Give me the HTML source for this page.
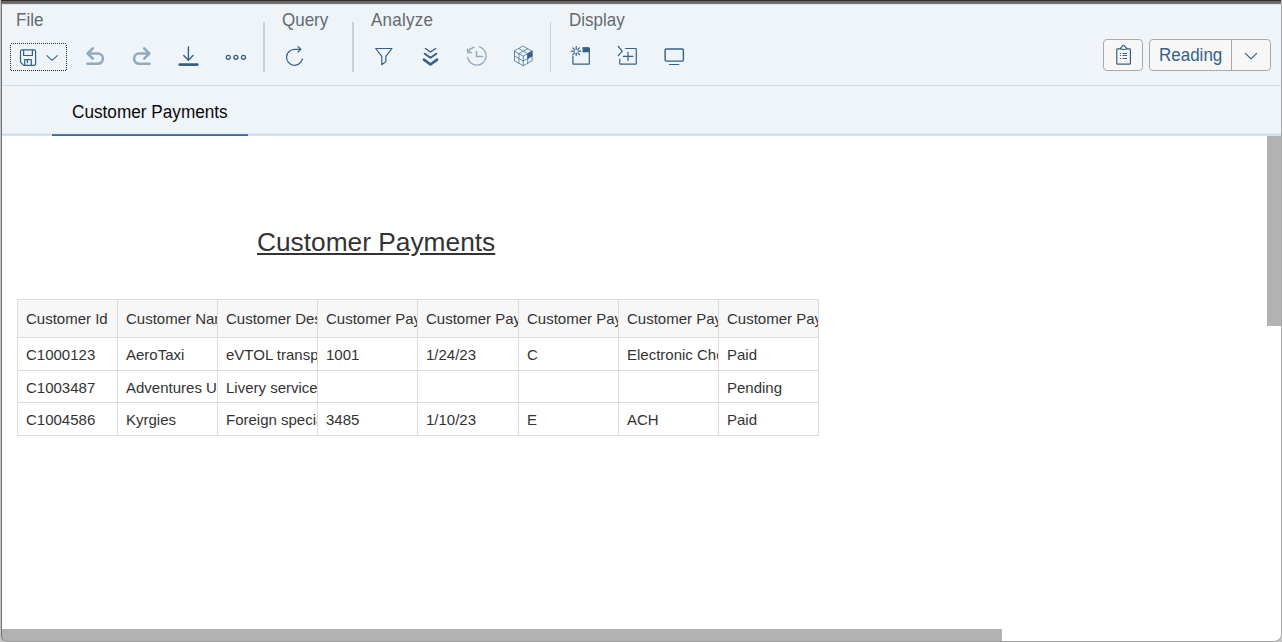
<!DOCTYPE html>
<html>
<head>
<meta charset="utf-8">
<title>Customer Payments</title>
<style>
*{box-sizing:border-box;margin:0;padding:0}
html,body{width:1282px;height:642px;overflow:hidden;background:#c2c2c2;font-family:"Liberation Sans",sans-serif}
#clip{position:absolute;left:1px;top:0;width:1281px;height:642px;overflow:hidden;border-radius:0 0 8px 6px;background:#fff}
#win{position:absolute;left:-1px;top:0;width:1282px;height:642px;background:#fff}
#frame{position:absolute;left:1px;top:3px;width:1281px;height:639px;border-radius:0 0 8px 6px;border-left:1px solid #747474;border-right:1px solid #a6a6a6;border-bottom:1px solid #9b9b9b}
.abs{position:absolute}
#hdr{left:2px;top:4px;width:1279px;height:81px;background:#eff4f9}
#hdrline{left:2px;top:85px;width:1279px;height:1px;background:#cbdcee}
#tabbar{left:2px;top:86px;width:1279px;height:47px;background:#eff4f9}
.gl{position:absolute;top:8px;font-size:18.2px;line-height:24px;color:#646a70;white-space:nowrap;transform:scaleX(0.934);transform-origin:0 0}
.sep{position:absolute;top:22px;height:50px;width:2px;background:#c7cfd9}
.btn{position:absolute;top:39px;height:32px;background:#f7f7f7;border:1px solid #a9a9a9;border-radius:4px}
svg{position:absolute;left:0;top:0;overflow:visible}
.s{fill:none;stroke:#346187;stroke-width:1.2;stroke-linecap:round;stroke-linejoin:round}
.d{fill:none;stroke:#91aac0;stroke-linecap:round;stroke-linejoin:round}
table{position:absolute;left:17px;top:299px;border-collapse:collapse;table-layout:fixed;width:801px;font-size:15px;color:#333}
td,th{border:1px solid #dcdcdc;overflow:hidden;white-space:nowrap;text-align:left;font-weight:normal;padding:0 0 0 8px}
th{background:#f7f7f7;height:38px}
td{height:33px}
tr.r2 td{height:32px;padding-top:2px}
</style>
</head>
<body>
<div id="clip"><div id="win">
  <!-- header toolbar -->
  <div id="hdr" class="abs"></div>
  <div id="hdrline" class="abs"></div>
  <div id="tabbar" class="abs"></div>

  <div class="gl" style="left:16px">File</div>
  <div class="gl" style="left:282px">Query</div>
  <div class="gl" style="left:371px;letter-spacing:0.25px">Analyze</div>
  <div class="gl" style="left:569px">Display</div>

  <div class="sep" style="left:263px"></div>
  <div class="sep" style="left:352px"></div>
  <div class="sep" style="left:550px;width:1px"></div>

  <!-- focused save button (dotted) -->
  <div class="abs" style="left:11px;top:43px;width:55px;height:1px;background:repeating-linear-gradient(90deg,#2a2a2a 0 1px,transparent 1px 2px)"></div>
  <div class="abs" style="left:11px;top:70px;width:55px;height:1px;background:repeating-linear-gradient(90deg,#2a2a2a 0 1px,transparent 1px 2px)"></div>
  <div class="abs" style="left:10px;top:45px;width:1px;height:25px;background:repeating-linear-gradient(180deg,#2a2a2a 0 1px,transparent 1px 2px)"></div>
  <div class="abs" style="left:66px;top:45px;width:1px;height:25px;background:repeating-linear-gradient(180deg,#2a2a2a 0 1px,transparent 1px 2px)"></div>

  <!-- right buttons -->
  <div class="btn" style="left:1103px;width:40px"></div>
  <div class="btn" style="left:1149px;width:122px"></div>
  <div class="abs" style="left:1231px;top:40px;width:1px;height:30px;background:#a9a9a9"></div>
  <div class="abs" style="left:1159px;top:43px;font-size:18.2px;line-height:24px;color:#346187;transform:scaleX(0.934);transform-origin:0 0">Reading</div>

  <!-- icons -->
  <svg id="icons" width="1282" height="100" viewBox="0 0 1282 100">
    <!-- save -->
    <path class="s" d="M21.9,49.8 H34.2 Q35.6,49.8 35.6,51.2 V63.9 Q35.6,65.3 34.2,65.3 H23.6 L20.5,62.2 V51.2 Q20.5,49.8 21.9,49.8 Z"/>
    <path class="s" d="M23.6,50 V55.5 H32.4 V50"/>
    <path class="s" d="M24.7,65.2 V59.6 H31.3 V65.2"/>
    <path class="s" d="M27.4,59.8 V62.7"/>
    <path class="s" style="stroke-width:1.1" d="M46.9,55.7 L52.1,60.3 L57.3,55.7"/>
    <!-- undo / redo (disabled) -->
    <path class="d" style="stroke-width:2.6" d="M92.8,48.3 L87.6,53.5 L92.8,58.7 M87.6,53.5 H97.8 A5.1,5.1 0 0 1 97.8,63.7 H87.5"/>
    <path class="d" style="stroke-width:2.6" d="M144.2,48.3 L149.4,53.5 L144.2,58.7 M149.4,53.5 H139.2 A5.1,5.1 0 0 0 139.2,63.7 H149.5"/>
    <!-- download -->
    <path class="s" style="stroke-width:1.4" d="M188.4,46.9 V60 M183.8,55.6 L188.4,60.2 L193,55.6"/>
    <path class="s" style="stroke-width:2.9" d="M179.8,64.6 H197.2"/>
    <!-- overflow -->
    <circle class="s" style="stroke-width:1.3" cx="228.3" cy="57.3" r="2"/>
    <circle class="s" style="stroke-width:1.3" cx="235.9" cy="57.3" r="2"/>
    <circle class="s" style="stroke-width:1.3" cx="243.5" cy="57.3" r="2"/>
    <!-- refresh -->
    <path class="s" style="stroke-width:1.2" d="M300.6,49.3 H294.4 A8,8 0 1 0 302.4,58.9"/>
    <path class="s" style="stroke-width:1.2" d="M298,46.6 L300.8,49.3 L298,52"/>
    <!-- filter -->
    <path class="s" style="stroke-width:1.2" d="M375.7,48.5 H392 L385.8,56.3 V61.6 L381.8,64.8 V56.3 Z"/>
    <!-- drill down -->
    <path class="s" style="stroke-width:1.4" d="M425.4,48.5 L430.5,52 L435.6,48.5"/>
    <path class="s" style="stroke-width:2" d="M424.7,53.7 L430.5,57.8 L436.3,53.7"/>
    <path class="s" style="stroke-width:2.6" d="M423.9,59.6 L430.5,64.5 L437.1,59.6"/>
    <!-- history (disabled) -->
    <path class="d" style="stroke-width:1.4" d="M479.4,46.9 A9.3,9.3 0 1 1 467.7,57.4"/>
    <path class="d" style="stroke-width:1.4" d="M474.1,47.2 Q469.5,48.8 467.8,52.4 M467.4,49.3 L467.8,52.5 L471.6,52.5"/>
    <path class="d" style="stroke-width:1.5" d="M476.5,51.4 V56.6 H482.8"/>
    <!-- cube -->
    <g class="s" style="stroke-width:0.7">
      <path d="M523.3,46.2 L532.1,51.2 V60.8 L523.3,65.7 L514.5,60.8 V51.2 Z"/>
      <path d="M514.5,51.2 L523.3,56.2 L532.1,51.2 M523.3,56.2 V65.7"/>
      <path d="M518.9,48.7 L527.7,53.7 V63.2 M527.7,48.7 L518.9,53.7 V63.2"/>
      <path d="M514.5,56 L523.3,61 L532.1,56"/>
    </g>
    <path d="M527.7,53.7 L532.1,51.2 V56 L527.7,58.5 Z" fill="#346187" stroke="#346187" stroke-width="0.6"/>
    <!-- new item -->
    <path class="s" d="M582.8,47.9 H588.5 Q589.3,47.9 589.3,48.7 V63.4 Q589.3,64.2 588.5,64.2 H573.7 Q572.9,64.2 572.9,63.4 V56"/>
    <path d="M582.6,47.4 H588.2 Q589.9,47.4 589.9,49 V51.9 L582.6,52.6 Z" fill="#346187"/>
    <path class="s" style="stroke-width:1.2" d="M576.2,46.5 V49.4 M576.2,53 V55.6 M571.3,51.2 H574.3 M578.1,51.2 H580.8 M572.9,47.9 L574.6,49.6 M577.8,52.8 L579.5,54.5 M579.5,47.9 L577.8,49.6 M574.6,52.8 L572.9,54.5"/>
    <!-- add -->
    <path class="s" d="M618.3,46.5 L622.3,51.2 L618.3,55.6"/>
    <path class="s" d="M625.5,48.5 H635.5 Q636.3,48.5 636.3,49.3 V63.4 Q636.3,64.2 635.5,64.2 H620.6 Q619.8,64.2 619.8,63.4 V59.2"/>
    <path class="s" style="stroke-width:1.2" d="M623.4,56.4 H632.8 M628,52.2 V60.6"/>
    <!-- screen -->
    <rect class="s" style="stroke-width:1.4" x="665.1" y="49" width="18.3" height="12.1" rx="1.3"/>
    <path class="s" style="stroke-width:1.2" d="M669.4,64.5 H678.8"/>
    <!-- clipboard -->
    <path class="s" style="stroke-width:1.2" d="M1120.6,48.9 H1117.6 Q1116.8,48.9 1116.8,49.7 V63.4 Q1116.8,64.2 1117.6,64.2 H1129.6 Q1130.4,64.2 1130.4,63.4 V49.7 Q1130.4,48.9 1129.6,48.9 H1126.6"/>
    <path class="s" style="stroke-width:1.2" d="M1120.3,48.6 L1122.6,45.8 Q1123.6,44.9 1124.6,45.8 L1126.9,48.6 Q1123.6,50.6 1120.3,48.6 Z"/>
    <path class="s" style="stroke-width:1.1;stroke-linecap:butt" d="M1119.9,53.5 H1121 M1122.4,53.5 H1127.1 M1119.9,55.5 H1121 M1122.4,55.5 H1127.1 M1119.9,58.5 H1121 M1122.4,58.5 H1127.1"/>
    <!-- reading chevron -->
    <path class="s" style="stroke-width:1.2" d="M1245.4,53.3 L1251,58.9 L1256.6,53.3"/>
  </svg>

  <!-- tab -->
  <div class="abs" style="left:72px;top:100.1px;font-size:17.2px;line-height:22px;color:#0a0a0a;white-space:nowrap;transform:scaleY(1.045);transform-origin:0 0">Customer Payments</div>
  <div class="abs" style="left:2px;top:133px;width:1279px;height:1px;background:#e1ebf5"></div>
  <div class="abs" style="left:2px;top:134px;width:1279px;height:1px;background:#cedeed"></div>
  <div class="abs" style="left:2px;top:135px;width:1279px;height:1px;background:#d1e2f2"></div>
  <div class="abs" style="left:52px;top:134px;width:196px;height:1px;background:#4d83b5"></div>
  <div class="abs" style="left:52px;top:135px;width:196px;height:1px;background:#2e6da4"></div>

  <!-- report title -->
  <div class="abs" style="left:257px;top:225.5px;font-size:26.3px;line-height:32px;color:#333;text-decoration:underline;white-space:nowrap">Customer Payments</div>

  <table>
    <colgroup><col style="width:100px"><col style="width:100px"><col style="width:100px"><col style="width:100px"><col style="width:101px"><col style="width:100px"><col style="width:100px"><col style="width:100px"></colgroup>
    <tr><th>Customer Id</th><th>Customer Name</th><th>Customer Description</th><th>Customer Payment Id</th><th>Customer Payment Date</th><th>Customer Payment Type</th><th>Customer Payment Method</th><th>Customer Payment Status</th></tr>
    <tr><td>C1000123</td><td>AeroTaxi</td><td>eVTOL transport</td><td>1001</td><td>1/24/23</td><td>C</td><td>Electronic Check</td><td>Paid</td></tr>
    <tr class="r2"><td>C1003487</td><td>Adventures Unlimited</td><td>Livery services</td><td></td><td></td><td></td><td></td><td>Pending</td></tr>
    <tr><td>C1004586</td><td>Kyrgies</td><td>Foreign specialty</td><td>3485</td><td>1/10/23</td><td>E</td><td>ACH</td><td>Paid</td></tr>
  </table>

  <!-- scrollbars -->
  <div class="abs" style="left:1267px;top:136px;width:14px;height:190px;background:#b2b2b2"></div>
  <div class="abs" style="left:2px;top:629px;width:1000px;height:12px;background:#b2b2b2"></div>

  <!-- window chrome -->
  <div class="abs" style="left:0;top:0;width:1282px;height:1px;background:#2f2f2f"></div>
  <div class="abs" style="left:0;top:1px;width:1282px;height:2px;background:#676767"></div>
  <div class="abs" style="left:0;top:3px;width:1282px;height:1px;background:#7b7977"></div>
  <div class="abs" style="left:2px;top:4px;width:1279px;height:1px;background:#d4e3f2"></div>
</div></div>
<div id="frame"></div>
<div class="abs" style="left:1281px;top:0;width:1px;height:4px;background:#c4c4c4"></div>
</body>
</html>
